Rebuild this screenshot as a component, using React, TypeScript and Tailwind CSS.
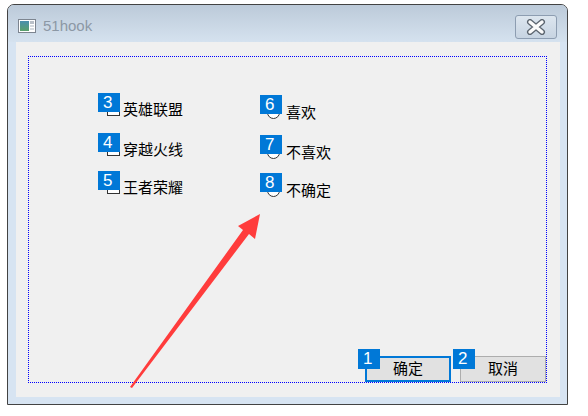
import React from "react";

const cjk = "font-['Liberation_Sans','Noto_Sans_CJK_SC',sans-serif]";

function Badge({ n, className }: { n: number; className: string }) {
    return (
        <span
            className={`absolute w-[22px] h-[19px] bg-[#0078d7] text-white text-[17px] leading-[19px] pl-[5px] font-['Liberation_Sans',sans-serif] ${className}`}
        >
            {n}
        </span>
    );
}

function CheckItem({ n, label }: { n: number; label: string }) {
    return (
        <div className="flex items-center h-[13px]">
            <div className="relative w-[13px] h-[13px] border border-[#333] bg-white shrink-0">
                <Badge n={n} className="left-[-10px] top-[-11px]" />
            </div>
            <span className="ml-[3px] text-[15px] leading-[13px] text-black whitespace-nowrap">{label}</span>
        </div>
    );
}

function RadioItem({ n, label }: { n: number; label: string }) {
    return (
        <div className="flex items-center h-[13px]">
            <div className="relative w-[13px] h-[13px] rounded-full border border-[#333] bg-white shrink-0">
                <Badge n={n} className="left-[-8px] top-[-12px]" />
            </div>
            <span className="ml-[6px] text-[15px] leading-[13px] text-black whitespace-nowrap">{label}</span>
        </div>
    );
}

export default function App() {
    return (
        <div className={`relative w-[588px] h-[416px] bg-white overflow-hidden ${cjk}`}>
            <div className="ml-[7px] mt-[4px] w-[561px] h-[401px] border border-[#434343] rounded-t-[7px] bg-[#d7e4f2] flex flex-col overflow-hidden">
                {/* title bar */}
                <div className="h-[37px] flex items-start pl-[10px] pr-[10px] pt-[10px] bg-gradient-to-b from-[#bccad9] to-[#d5e2ef]">
                    <svg width="18" height="14" viewBox="0 0 18 14" className="mt-[4px]">
                        <defs>
                            <linearGradient id="ig" x1="0" y1="0" x2="0" y2="1">
                                <stop offset="0" stopColor="#4a8fae" />
                                <stop offset="1" stopColor="#5aa06a" />
                            </linearGradient>
                        </defs>
                        <rect x="0.5" y="0.5" width="17" height="13" fill="#fff" stroke="#7d8590" />
                        <rect x="2" y="2" width="9" height="10" fill="url(#ig)" />
                        <rect x="12" y="2" width="4" height="3" fill="#b9c0c8" />
                        <rect x="12" y="6" width="4" height="2" fill="#d5dadf" />
                        <rect x="12" y="9" width="4" height="2" fill="#d5dadf" />
                    </svg>
                    <span className="ml-[7px] mt-[2px] text-[15px] leading-[18px] text-[#8c98a5] font-['Liberation_Sans',sans-serif]">
                        51hook
                    </span>
                    <div className="ml-auto w-[42px] h-[24px] rounded-[3px] border border-[#8d9db1] bg-gradient-to-b from-[#dde6ef] to-[#c7d4e2] flex items-center justify-center">
                        <svg width="22" height="16" viewBox="0 0 22 16">
                            <path d="M5 3 L17 13 M17 3 L5 13" stroke="#5d6670" strokeWidth="6" strokeLinecap="round" />
                            <path d="M5 3 L17 13 M17 3 L5 13" stroke="#fbfbfb" strokeWidth="3.4" strokeLinecap="round" />
                        </svg>
                    </div>
                </div>

                {/* client area */}
                <div className="ml-[8px] w-[544px] h-[355px] bg-[#f0f0f0] pl-[12px] pr-[13px] pt-[14px]">
                    <div className="w-[519px] h-[327px] border border-dotted border-[#0000ff] flex flex-col">
                        <div className="flex pt-[46px]">
                            <div className="ml-[78px] w-[160px] flex flex-col">
                                <div className="h-[40px]">
                                    <CheckItem n={3} label="英雄联盟" />
                                </div>
                                <div className="h-[38px]">
                                    <CheckItem n={4} label="穿越火线" />
                                </div>
                                <CheckItem n={5} label="王者荣耀" />
                            </div>
                            <div className="mt-[3px] flex flex-col">
                                <div className="h-[40px]">
                                    <RadioItem n={6} label="喜欢" />
                                </div>
                                <div className="h-[38px]">
                                    <RadioItem n={7} label="不喜欢" />
                                </div>
                                <RadioItem n={8} label="不确定" />
                            </div>
                        </div>
                        <div className="mt-auto flex justify-end gap-[9px]">
                            <div className="relative w-[86px] h-[26px] border-2 border-[#0078d7] bg-[#e1e1e1] flex items-center justify-center text-[15px] text-black">
                                <Badge n={1} className="left-[-9px] top-[-9px] h-[20px]" />
                                确定
                            </div>
                            <div className="relative w-[86px] h-[26px] border border-[#adadad] bg-[#e1e1e1] flex items-center justify-center text-[15px] text-black">
                                <Badge n={2} className="left-[-8px] top-[-8px] h-[20px]" />
                                取消
                            </div>
                        </div>
                    </div>
                </div>
            </div>

            {/* annotation arrow */}
            <svg className="absolute left-0 top-0 pointer-events-none" width="588" height="416" viewBox="0 0 588 416">
                <polygon
                    points="130,387 243,230 238,226 260,214 255,239 249,234 132,388"
                    fill="#ff3c3c"
                />
            </svg>
        </div>
    );
}
